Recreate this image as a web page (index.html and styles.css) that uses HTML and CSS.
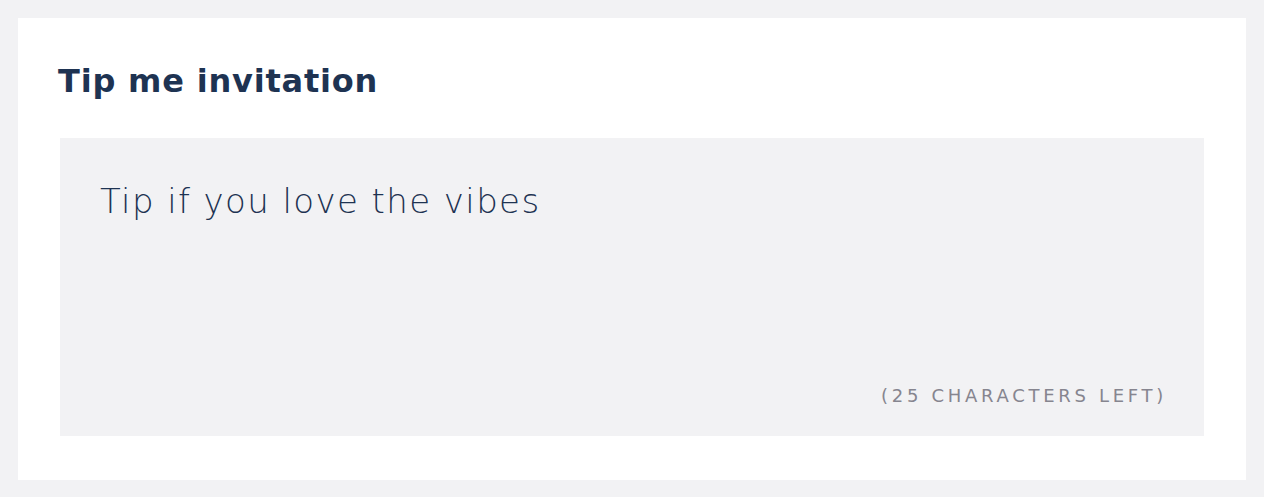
FILE: index.html
```html
<!DOCTYPE html>
<html lang="en">
	<head>
		<meta charset="UTF-8">
		<title>Tip me invitation</title>
		<link rel="stylesheet" href="styles.css">
	</head>
	<body>

		<div class="card">
			<h2 class="card-title">Tip me invitation</h2>

			<div class="message-box">
				<p class="message-text">Tip if you love the vibes</p>
				<span class="message-count">(25 characters left)</span>
			</div>
		</div>

	</body>
</html>
```

FILE: styles.css
```css
/* all */
* {
	margin: 0;
	padding: 0;
	box-sizing: border-box;
}

body {
	background-color: #f2f2f4;
	padding: 18px;
	font-family: "DejaVu Sans", "Open Sans", sans-serif;
	color: #1e3352;
}

.card {
	background-color: #ffffff;
	height: 462px;
	padding: 43px 42px 44px 42px;
	display: flex;
	flex-direction: column;
}

.card-title {
	font-size: 32px;
	font-weight: 700;
	letter-spacing: 0.8px;
	line-height: 40px;
	text-indent: -2px;
	margin-bottom: 37px;
}

/* grey text area */
.message-box {
	flex: 1;
	background-color: #f2f2f4;
	padding: 42px 37px 28px 40px;
	display: flex;
	flex-direction: column;
}

.message-text {
	font-size: 34px;
	font-weight: 200;
	letter-spacing: 1.4px;
	line-height: 42px;
}

.message-count {
	margin-top: auto;
	align-self: flex-end;
	font-size: 18px;
	letter-spacing: 3.7px;
	text-transform: uppercase;
	color: #86858f;
	line-height: 24px;
}
```
